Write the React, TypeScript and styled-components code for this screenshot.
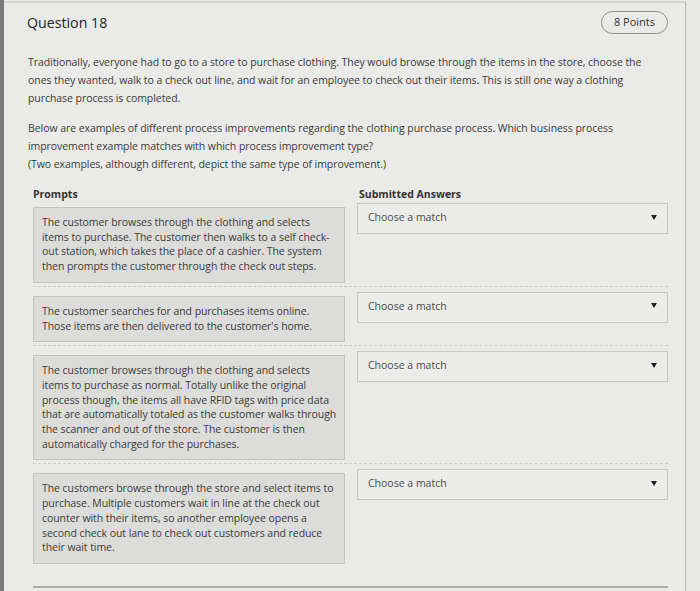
import React from "react";
import styled, { createGlobalStyle } from "styled-components";

const GlobalStyle = createGlobalStyle`
  html, body {
    margin: 0;
    padding: 0;
    background: #e8e8e6;
  }
  body {
    font-family: "Open Sans", "Liberation Sans", sans-serif;
    color: #3a3a3a;
  }
`;

const Frame = styled.div`
  width: 700px;
  height: 591px;
  overflow: hidden;
  display: flex;
  background: #e8e8e6;
  border-left: 4px solid #7a7a7a;
  box-sizing: border-box;
`;

const Card = styled.div`
  width: 682px;
  box-sizing: border-box;
  border-right: 1px solid #b8b8b6;
  border-top: 2px solid #d2d2d0;
  margin-top: 1px;
  padding: 7px 17px 0 23px;
  background: #eaeae8;
`;

const Header = styled.div`
  display: flex;
  justify-content: space-between;
  align-items: center;
  height: 24px;
`;

const Title = styled.h2`
  margin: 0;
  font-size: 14.2px;
  font-weight: 400;
  color: #262626;
`;

const PointsPill = styled.span`
  font-size: 11px;
  color: #333;
  border: 1px solid #8c8c8c;
  border-radius: 12px;
  padding: 3px 12px 4px;
  line-height: 14px;
`;

const Paragraph = styled.p<{ $top: number }>`
  margin: ${(p) => p.$top}px 0 0 1px;
  font-size: 10.5px;
  letter-spacing: -0.06px;
  line-height: 18px;
  white-space: nowrap;
`;

const Matching = styled.div`
  margin: 14px 0 0 6px;
  border-bottom: 2px solid #aeaeac;
  padding-bottom: 16px;
`;

const ColumnHeads = styled.div`
  display: grid;
  grid-template-columns: 312px 1fr;
  column-gap: 14px;
  font-size: 10.5px;
  font-weight: 700;
  color: #333;
`;

const Row = styled.div<{ $last?: boolean }>`
  display: grid;
  grid-template-columns: 312px 1fr;
  column-gap: 12px;
  align-items: start;
  padding: 2px 0 3px;
  margin-bottom: 3px;
  border-bottom: ${(p) => (p.$last ? "none" : "1px dashed #cbcbc9")};
`;

const PromptBox = styled.div`
  margin-top: 4px;
  padding: 7px 8px 8px;
  background: #dcdcda;
  border: 1px solid #c3c3c1;
  font-size: 10.5px;
  letter-spacing: -0.06px;
  line-height: 14.7px;
  color: #3b3b3b;
  white-space: nowrap;
`;

const Select = styled.div`
  height: 31px;
  box-sizing: border-box;
  display: flex;
  align-items: center;
  justify-content: space-between;
  padding: 0 10px 3px 10px;
  background: #ececea;
  border: 1px solid #c6c6c4;
  font-size: 10.5px;
  color: #4a4a4a;
`;

const Arrow = styled.span`
  width: 0;
  height: 0;
  border-left: 3.5px solid transparent;
  border-right: 3.5px solid transparent;
  border-top: 5px solid #1f1f1f;
`;

const Lines = ({ lines }: { lines: string[] }) => (
  <>
    {lines.map((l, i) => (
      <React.Fragment key={i}>
        {l}
        {i < lines.length - 1 && <br />}
      </React.Fragment>
    ))}
  </>
);

const intro = [
  "Traditionally, everyone had to go to a store to purchase clothing. They would browse through the items in the store, choose the",
  "ones they wanted, walk to a check out line, and wait for an employee to check out their items. This is still one way a clothing",
  "purchase process is completed.",
];

const question = [
  "Below are examples of different process improvements regarding the clothing purchase process. Which business process",
  "improvement example matches with which process improvement type?",
  "(Two examples, although different, depict the same type of improvement.)",
];

const prompts: string[][] = [
  [
    "The customer browses through the clothing and selects",
    "items to purchase. The customer then walks to a self check-",
    "out station, which takes the place of a cashier. The system",
    "then prompts the customer through the check out steps.",
  ],
  [
    "The customer searches for and purchases items online.",
    "Those items are then delivered to the customer's home.",
  ],
  [
    "The customer browses through the clothing and selects",
    "items to purchase as normal. Totally unlike the original",
    "process though, the items all have RFID tags with price data",
    "that are automatically totaled as the customer walks through",
    "the scanner and out of the store. The customer is then",
    "automatically charged for the purchases.",
  ],
  [
    "The customers browse through the store and select items to",
    "purchase. Multiple customers wait in line at the check out",
    "counter with their items, so another employee opens a",
    "second check out lane to check out customers and reduce",
    "their wait time.",
  ],
];

const App = (): React.ReactElement => (
  <>
    <GlobalStyle />
    <Frame>
      <Card>
        <Header>
          <Title>Question 18</Title>
          <PointsPill>8 Points</PointsPill>
        </Header>
        <Paragraph $top={19}>
          <Lines lines={intro} />
        </Paragraph>
        <Paragraph $top={12}>
          <Lines lines={question} />
        </Paragraph>
        <Matching>
          <ColumnHeads>
            <span>Prompts</span>
            <span>Submitted Answers</span>
          </ColumnHeads>
          {prompts.map((p, i) => (
            <Row key={i} $last={i === prompts.length - 1}>
              <PromptBox>
                <Lines lines={p} />
              </PromptBox>
              <Select>
                <span>Choose a match</span>
                <Arrow />
              </Select>
            </Row>
          ))}
        </Matching>
      </Card>
    </Frame>
  </>
);

export default App;
